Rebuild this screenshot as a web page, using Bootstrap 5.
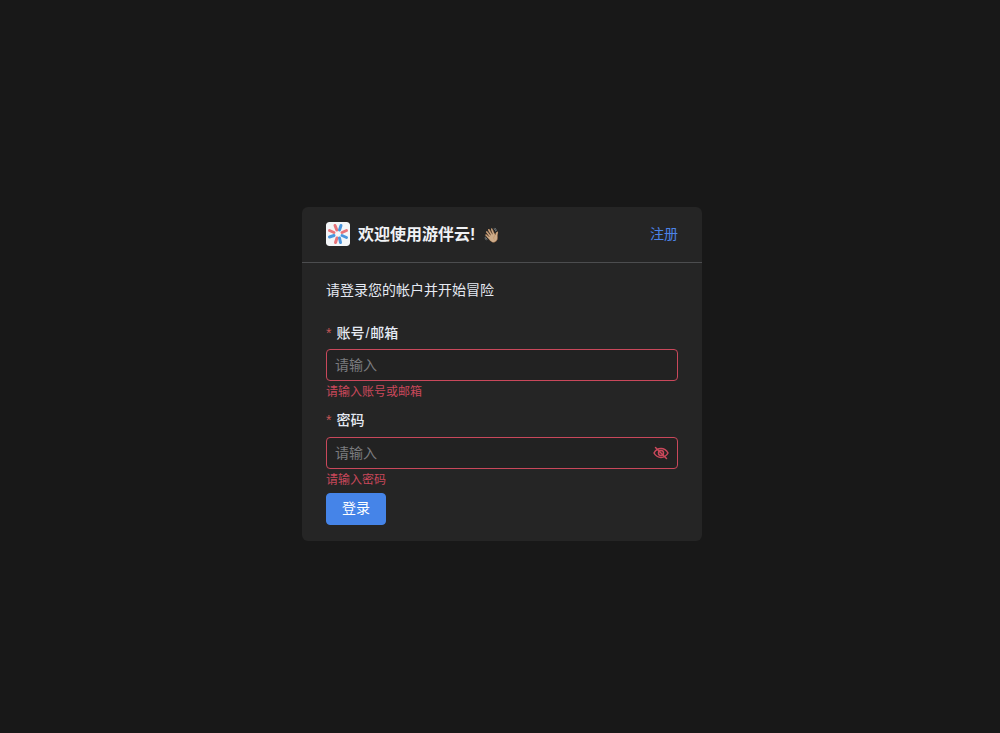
<!DOCTYPE html>
<html lang="zh-CN">
<head>
    <meta charset="UTF-8">
    <meta name="viewport" content="width=device-width, initial-scale=1.0">
    <title>登录</title>
    <link href="https://cdn.jsdelivr.net/npm/bootstrap@5.3.0/dist/css/bootstrap.min.css" rel="stylesheet">
    <style>
        body {
            background-color: #181818;
            font-family: "Liberation Sans", "Noto Sans CJK SC", sans-serif;
            font-size: 14px;
            color: #e5eaf3;
        }
        .login-page {
            min-height: 100vh;
            padding: 207px 0 0 4px;
        }
        .login-card {
            width: 400px;
            background-color: #252525;
            border: 0;
            border-radius: 6px;
            color: #e5eaf3;
        }
        .login-head {
            height: 56px;
            padding: 0 24px;
            background: transparent;
            border-bottom: 1px solid #4c4d4f;
        }
        .login-title {
            font-size: 16px;
            font-weight: 700;
            color: #f0f2f5;
        }
        .logo-box {
            width: 24px;
            height: 24px;
            border-radius: 3px;
            margin-bottom: 2px;
        }
        .wave {
            font-size: 14px;
            line-height: 1;
            margin-left: 3px;
            opacity: .9;
        }
        .signup-link {
            color: #4c84e8;
            text-decoration: none;
        }
        .login-body {
            padding: 16px 24px 16px;
        }
        .intro {
            line-height: 22px;
            margin-bottom: 21px;
        }
        .field-label {
            line-height: 22px;
            margin-bottom: 5px;
            font-weight: 500;
        }
        .field-label-b {
            margin-bottom: 6px;
        }
        .req {
            color: #c45656;
            margin-right: 5px;
        }
        .slash {
            margin: 0 1px;
        }
        .login-input {
            height: 32px;
            padding: 0 9px 0 8px;
            font-size: 14px;
            color: #e5eaf3;
            background: #222222;
            border: 1px solid #c9485b;
            border-radius: 4px;
        }
        .login-input::placeholder {
            color: #7b7c7f;
        }
        .login-input:focus {
            background: #222222;
            color: #e5eaf3;
            border-color: #c9485b;
            box-shadow: none;
        }
        .pwd-input {
            padding-right: 32px;
        }
        .eye-btn {
            top: 8px;
            right: 9px;
            line-height: 0;
        }
        .err-text {
            color: #c9485b;
            font-size: 12px;
            line-height: 22px;
            height: 19px;
            margin-bottom: 9px;
        }
        .err-last {
            margin-bottom: 5px;
        }
        .login-btn {
            width: 60px;
            height: 32px;
            padding: 0 0 2px;
            font-size: 14px;
            background-color: #4584e8;
            border-color: #4584e8;
            border-radius: 4px;
        }
    </style>
</head>
<body>
    <div class="login-page d-flex justify-content-center align-items-start">
        <div class="card login-card">
            <div class="card-header login-head d-flex justify-content-between align-items-center">
                <div class="d-flex align-items-center gap-2 login-title">
                    <svg class="logo-box" viewBox="0 0 24 24">
                        <rect width="24" height="24" rx="3" fill="#f4f6f8"/>
                        <g stroke-width="3" stroke-linecap="round">
                            <path d="M9 3.500 10.800 8" stroke="#e8747a"/>
                            <path d="M15 3.500 13.500 8" stroke="#4a96de"/>
                            <path d="M3.500 8.500 8 10.500" stroke="#e8747a"/>
                            <path d="M20.500 8.500 16 10.500" stroke="#e8747a"/>
                            <path d="M3.500 15 8 13.500" stroke="#4a96de"/>
                            <path d="M20.500 15.500 16 13.500" stroke="#4a96de"/>
                            <path d="M9.500 20.500 11 16" stroke="#e8747a"/>
                            <path d="M14.500 20.500 13.500 16" stroke="#4a96de"/>
                        </g>
                    </svg>
                    <span>欢迎使用游伴云! <span class="wave">👋🏼</span></span>
                </div>
                <a href="#" class="signup-link">注册</a>
            </div>
            <div class="card-body login-body">
                <div class="intro">请登录您的帐户并开始冒险</div>
                <form>
                    <div class="field-label"><span class="req">*</span>账号<span class="slash">/</span>邮箱</div>
                    <input type="text" class="form-control login-input" placeholder="请输入">
                    <div class="err-text">请输入账号或邮箱</div>

                    <div class="field-label field-label-b"><span class="req">*</span>密码</div>
                    <div class="position-relative">
                        <input type="password" class="form-control login-input pwd-input" placeholder="请输入">
                        <span class="eye-btn position-absolute">
                            <svg width="16" height="16" viewBox="0 0 16 16" fill="none" stroke="#c9485b" stroke-width="1.500" stroke-linecap="round">
                                <path d="M1 8c1.600-2.900 4-4.400 7-4.400s5.400 1.500 7 4.400c-1.600 2.900-4 4.400-7 4.400S2.600 10.900 1 8z"/>
                                <circle cx="8" cy="8" r="2.500"/>
                                <path d="M2.500 2.500l11 11"/>
                            </svg>
                        </span>
                    </div>
                    <div class="err-text err-last">请输入密码</div>

                    <button type="submit" class="btn btn-primary login-btn">登录</button>
                </form>
            </div>
        </div>
    </div>
    <script src="https://cdn.jsdelivr.net/npm/bootstrap@5.3.0/dist/js/bootstrap.bundle.min.js"></script>
</body>
</html>
